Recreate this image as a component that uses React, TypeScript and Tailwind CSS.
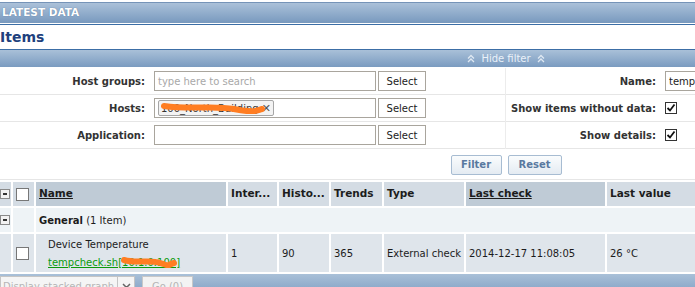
import React from 'react'

const Chevrons = () => (
  <svg width="8" height="9" viewBox="0 0 8 9" className="inline-block">
    <path d="M1 4.5 L4 1.5 L7 4.5 M1 8 L4 5 L7 8" fill="none" stroke="#dfe8f2" strokeWidth="1.3" />
  </svg>
)

const Scribble = ({ w }: { w: number }) => (
  <svg width={w} height="12" viewBox={`0 0 ${w} 12`} className="absolute pointer-events-none">
    <path
      d={`M3 4 C ${w * 0.3} 8, ${w * 0.5} 3, ${w * 0.7} 7 S ${w - 10} 9, ${w - 3} 7`}
      fill="none"
      stroke="#ff7d22"
      strokeWidth="6"
      strokeLinecap="round"
    />
  </svg>
)

const Checked = () => (
  <span className="w-[12px] h-[12px] border border-[#333] bg-white flex items-center justify-center">
    <svg width="10" height="10" viewBox="0 0 10 10">
      <path d="M1.5 5 L4 7.5 L8.5 1.5" fill="none" stroke="#111" strokeWidth="1.8" />
    </svg>
  </span>
)

const Box = () => <span className="block w-[13px] h-[13px] border border-[#777] bg-white" />

const Collapse = () => (
  <span className="block -ml-[3px] w-[10px] h-[10px] border border-[#8a8a8a] bg-[#f2f2f2] relative">
    <span className="absolute left-[2px] right-[2px] top-[3px] h-[2px] bg-[#333]" />
  </span>
)

const Label = ({ children }: { children: React.ReactNode }) => (
  <div className="h-full flex items-center justify-end pr-[9px] font-bold text-[#333]">{children}</div>
)

const Input = ({ className = '', children }: { className?: string; children?: React.ReactNode }) => (
  <div className={`h-[20px] border border-[#a9a59d] bg-white flex items-center px-[3px] ${className}`}>{children}</div>
)

const SelectBtn = () => (
  <div className="h-[20px] w-[48px] ml-[2px] border border-[#a9a59d] bg-white flex items-center justify-center text-[#222]">
    Select
  </div>
)

const FilterRow = ({ children, h = 'h-[27px]' }: { children: React.ReactNode; h?: string }) => (
  <div className={`${h} border-b border-[#e6e6e6] flex items-center`}>{children}</div>
)

export default function App() {
  const th = 'h-[24px] px-[3px] text-left font-bold text-[10.5px] text-[#1c1c1c] bg-[#d4dce4] whitespace-nowrap overflow-hidden'
  const thSorted = 'h-[24px] px-[3px] text-left font-bold text-[10.5px] text-[#1c1c1c] bg-[#bfcbd6] underline'
  const td = 'px-[3px] bg-[#dfe5eb] text-[#1c1c1c] whitespace-nowrap'

  return (
    <div className="w-[695px] h-[287px] overflow-hidden bg-white font-['DejaVu_Sans',sans-serif] text-[10px]">
      <div className="w-[1012px] pt-[2px]">
        {/* Page title */}
        <div className="h-[21px] border-t border-[#7694b8] bg-gradient-to-b from-[#abc1d9] to-[#7899be] flex items-center pl-[2px] text-white font-bold text-[10.5px] [text-shadow:0_0_1px_#4a6c93]">
          LATEST DATA
        </div>
        <div className="h-px" />
        <div className="h-[26px] border-y border-[#3c6ea6] flex items-center text-[14px] font-bold text-[#203f7d]">
          Items
        </div>

        {/* Hide filter bar */}
        <div className="h-[17px] bg-gradient-to-b from-[#a9c0d8] to-[#7a9bc0] flex items-center justify-center gap-[6px] text-[#eaf1f9]">
          <Chevrons />
          <span>Hide filter</span>
          <Chevrons />
        </div>

        {/* Filter */}
        <div className="pt-px">
          <div className="flex">
            <div className="w-[506px] border-r border-[#ececec]">
              <FilterRow>
                <div className="w-[154px] h-full"><Label>Host groups:</Label></div>
                <Input className="w-[222px] text-[#a8a8a8]">type here to search</Input>
                <SelectBtn />
              </FilterRow>
              <FilterRow>
                <div className="w-[154px] h-full"><Label>Hosts:</Label></div>
                <Input className="w-[222px] px-[2px]">
                  <div className="relative h-[16px] border border-[#a6a6a6] rounded-[2px] bg-[#f3f3f3] flex items-center pl-[2px] pr-[2px] text-[#333]">
                    <span>100_North_Building</span>
                    <span className="ml-[3px] font-bold text-[#555] text-[11px] leading-none">✕</span>
                    <span className="absolute left-[2px] top-[1px]"><Scribble w={104} /></span>
                  </div>
                </Input>
                <SelectBtn />
              </FilterRow>
              <FilterRow>
                <div className="w-[154px] h-full"><Label>Application:</Label></div>
                <Input className="w-[222px]" />
                <SelectBtn />
              </FilterRow>
            </div>
            <div className="flex-1">
              <FilterRow>
                <div className="w-[159px] h-full"><Label>Name:</Label></div>
                <Input className="w-[200px] text-[#222]">temp</Input>
              </FilterRow>
              <FilterRow>
                <div className="w-[159px] h-full"><Label>Show items without data:</Label></div>
                <Checked />
              </FilterRow>
              <FilterRow>
                <div className="w-[159px] h-full"><Label>Show details:</Label></div>
                <Checked />
              </FilterRow>
            </div>
          </div>
          <FilterRow h="h-[31px]">
            <div className="w-full flex justify-center gap-[6px] pt-px">
              <div className="h-[20px] w-[51px] border border-[#a7bcd2] rounded-[2px] bg-gradient-to-b from-[#fafcfd] to-[#e4ebf2] flex items-center justify-center font-bold text-[#5979a0]">
                Filter
              </div>
              <div className="h-[20px] w-[54px] border border-[#a7bcd2] rounded-[2px] bg-gradient-to-b from-[#fafcfd] to-[#e4ebf2] flex items-center justify-center font-bold text-[#5979a0]">
                Reset
              </div>
            </div>
          </FilterRow>
        </div>

        {/* Table */}
        <table className="-ml-[2px] border-separate border-spacing-[2px] table-fixed w-[1014px]">
          <colgroup>
            <col className="w-[11px]" />
            <col className="w-[21px]" />
            <col className="w-[190px]" />
            <col className="w-[49px]" />
            <col className="w-[50px]" />
            <col className="w-[51px]" />
            <col className="w-[80px]" />
            <col className="w-[139px]" />
            <col />
          </colgroup>
          <thead>
            <tr>
              <th className={th}><Collapse /></th>
              <th className={th}><Box /></th>
              <th className={thSorted}>Name</th>
              <th className={th}>Inter...</th>
              <th className={th}>Histo...</th>
              <th className={th}>Trends</th>
              <th className={th}>Type</th>
              <th className={thSorted}>Last check</th>
              <th className={th}>Last value</th>
            </tr>
          </thead>
          <tbody>
            <tr className="h-[24px]">
              <td className="px-[3px] bg-[#eef3f6]"><Collapse /></td>
              <td className="bg-[#eef3f6]" />
              <td colSpan={7} className="px-[3px] bg-[#eef3f6] text-[#1c1c1c]">
                <span className="font-bold">General</span> (1 Item)
              </td>
            </tr>
            <tr className="h-[38px]">
              <td className="bg-[#dfe5eb]" />
              <td className="px-[3px] bg-[#dfe5eb]"><Box /></td>
              <td className="pl-[12px] bg-[#dfe5eb] text-[#1c1c1c]">
                <div className="leading-[13px]">Device Temperature</div>
                <div className="mt-[5px] leading-[13px] relative">
                  <span className="text-[#0b9a0b] underline">tempcheck.sh[10.1.0.100]</span>
                  <span className="absolute left-[73px] top-0"><Scribble w={56} /></span>
                </div>
              </td>
              <td className={td}>1</td>
              <td className={td}>90</td>
              <td className={td}>365</td>
              <td className={td}>External check</td>
              <td className={td}>2014-12-17 11:08:05</td>
              <td className={td}>26 °C</td>
            </tr>
          </tbody>
        </table>

        {/* Footer actions */}
        <div className="h-[24px] bg-gradient-to-b from-[#a9c0d8] to-[#7a9bc0] flex items-start pt-[2px] gap-[7px]">
          <div className="flex h-[20px] bg-[#f5f5f5] border border-[#c5c5c5]">
            <div className="w-[116px] pl-[2px] flex items-center whitespace-nowrap overflow-hidden text-[#b5b5b5] text-[10px]">Display stacked graph</div>
            <div className="w-[17px] border-l border-[#c5c5c5] flex items-center justify-center">
              <svg width="9" height="6" viewBox="0 0 9 6">
                <path d="M1 1 L4.5 4.5 L8 1" fill="none" stroke="#666" strokeWidth="1.5" />
              </svg>
            </div>
          </div>
          <div className="h-[20px] w-[51px] bg-[#f3f3f3] border border-[#c8c8c8] flex items-center justify-center whitespace-nowrap text-[#b5b5b5] text-[10px]">
            Go (0)
          </div>
        </div>
      </div>
    </div>
  )
}
